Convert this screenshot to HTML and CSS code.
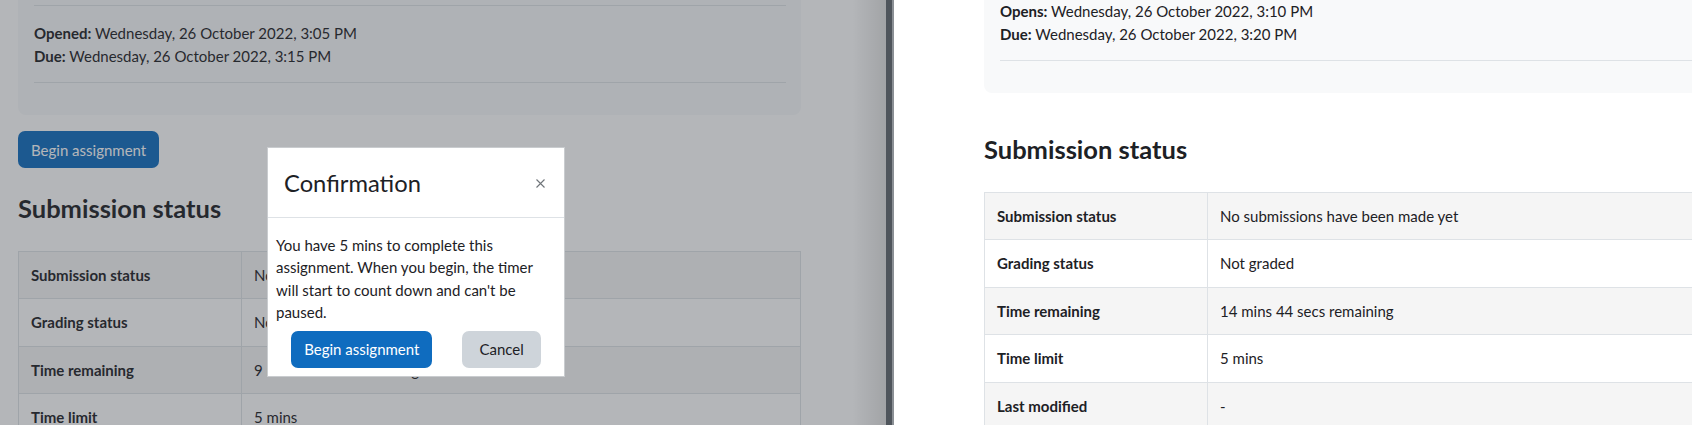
FILE: index.html
```html
<!DOCTYPE html>
<html lang="en">
<head>
    <meta charset="UTF-8">
    <title>Assignment</title>
    <link rel="stylesheet" href="styles.css">
</head>
<body>
<div class="screen">
    <div class="pane pane-left">
        <div class="page">
            <div class="card">
                <hr>
                <div class="dates">
                    <div><strong>Opened:</strong> Wednesday, 26 October 2022, 3:05 PM</div>
                    <div><strong>Due:</strong> Wednesday, 26 October 2022, 3:15 PM</div>
                </div>
                <hr>
            </div>
            <button type="button" class="btn btn-primary">Begin assignment</button>
            <h3>Submission status</h3>
            <table class="status">
                <tr><th>Submission status</th><td>No submissions have been made yet</td></tr>
                <tr><th>Grading status</th><td>Not graded</td></tr>
                <tr><th>Time remaining</th><td>9 mins 44 secs remaining</td></tr>
                <tr><th>Time limit</th><td>5 mins</td></tr>
            </table>
        </div>
        <div class="backdrop"></div>
        <div class="modal">
            <div class="modal-header">
                <h5>Confirmation</h5>
                <span class="close"><svg width="9" height="9" viewBox="0 0 9 9"><path d="M0.5 0.5L8.5 8.5M8.5 0.5L0.5 8.5" stroke="#6f7479" stroke-width="1.1" fill="none"/></svg></span>
            </div>
            <div class="modal-body">You have 5 mins to complete this assignment. When you begin, the timer will start to count down and can't be paused.</div>
            <div class="modal-footer">
                <button type="button" class="btn btn-primary">Begin assignment</button>
                <button type="button" class="btn btn-secondary">Cancel</button>
            </div>
        </div>
    </div>
    <div class="frame"></div>
    <div class="pane pane-right">
        <div class="page">
            <div class="card">
                <hr>
                <div class="dates">
                    <div><strong>Opens:</strong> Wednesday, 26 October 2022, 3:10 PM</div>
                    <div><strong>Due:</strong> Wednesday, 26 October 2022, 3:20 PM</div>
                </div>
                <hr>
            </div>
            <h3>Submission status</h3>
            <table class="status">
                <tr><th>Submission status</th><td>No submissions have been made yet</td></tr>
                <tr><th>Grading status</th><td>Not graded</td></tr>
                <tr><th>Time remaining</th><td>14 mins 44 secs remaining</td></tr>
                <tr><th>Time limit</th><td>5 mins</td></tr>
                <tr><th>Last modified</th><td>-</td></tr>
            </table>
        </div>
    </div>
</div>
</body>
</html>
```

FILE: styles.css
```css
body {
    margin: 0;
    font-family: "Lato", sans-serif;
    font-size: 15px;
    line-height: 1.5;
    color: #1d2125;
}
.screen {
    display: flex;
    width: 1692px;
    height: 425px;
    overflow: hidden;
}
.pane {
    background-color: white;
    overflow: hidden;
}
.pane-left {
    position: relative;
    flex: none;
    width: 886px;
}
.frame {
    flex: none;
    width: 8px;
    background: linear-gradient(to right, #4f555c 6px, #8b9095 6px);
}
.pane-right {
    flex: 1;
}
.pane-left .page {
    width: 783px;
    padding-left: 18px;
}
.pane-right .page {
    width: 786px;
    padding-left: 90px;
}

.card {
    background-color: #f8f9fa;
    border-radius: 0 0 8px 8px;
    padding: 25px 15px 32px 16px;
    margin-top: -20px;
    margin-bottom: 16px;
}
.pane-right .card {
    margin-top: -42px;
}
.card hr {
    border: 0;
    border-top: 1px solid #dee2e6;
    margin: 0;
}
.card .dates {
    margin: 16px 0 15px;
}

.btn {
    height: 37px;
    padding: 0 13px;
    border: 0;
    border-radius: 7px;
    font-family: inherit;
    font-size: 15px;
}
.btn-primary {
    background-color: #0f6cbf;
    color: white;
}
.btn-secondary {
    background-color: #ced4da;
    color: #1d2125;
    padding: 0 17px;
}
.page > .btn {
    display: block;
}

h3 {
    font-size: 25.5px;
    line-height: 1.2;
    font-weight: bold;
    margin: 25px 0 27px;
}
.pane-right h3 {
    margin-top: 41px;
}

table.status {
    width: 100%;
    border-collapse: collapse;
}
table.status th,
table.status td {
    border: 1px solid #dee2e6;
    padding: 12px;
    text-align: left;
    vertical-align: top;
}
table.status th {
    width: 198px;
}
table.status tr:nth-child(odd) {
    background-color: #f5f5f5;
}

.backdrop {
    position: absolute;
    top: 0;
    left: 0;
    right: 0;
    bottom: 0;
    background: linear-gradient(to right, rgba(0,0,0,0) 852px, rgba(0,0,0,0.1) 886px), rgba(52,58,64,0.37);
}
.modal {
    position: absolute;
    left: 267px;
    top: 147px;
    width: 298px;
    box-sizing: border-box;
    background-color: white;
    border: 1px solid #c9cccf;
}
.modal-header {
    display: flex;
    justify-content: space-between;
    align-items: center;
    padding: 21px 16px 19px;
    border-bottom: 1px solid #dee2e6;
}
.modal-header h5 {
    margin: 0;
    font-size: 23.75px;
    line-height: 1.2;
    font-weight: normal;
}
.modal-header .close {
    display: flex;
    margin-right: 3px;
}
.modal-body {
    padding: 16px 8px 0;
}
.modal-footer {
    display: flex;
    justify-content: center;
    gap: 30px;
    padding: 7px 0 8px;
}
```
